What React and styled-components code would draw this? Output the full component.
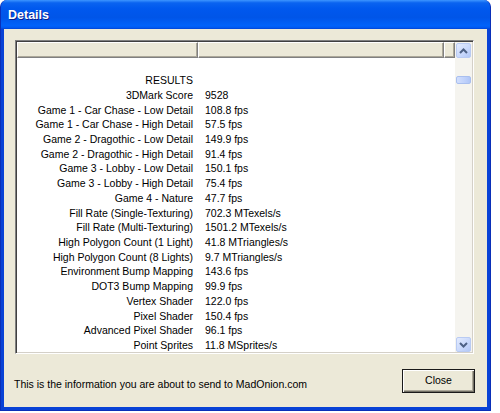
import React from 'react'
import styled, { createGlobalStyle } from 'styled-components'

const results = [
    ["", ""],
    ["RESULTS", ""],
    ["3DMark Score", "9528"],
    ["Game 1 - Car Chase - Low Detail", "108.8 fps"],
    ["Game 1 - Car Chase - High Detail", "57.5 fps"],
    ["Game 2 - Dragothic - Low Detail", "149.9 fps"],
    ["Game 2 - Dragothic - High Detail", "91.4 fps"],
    ["Game 3 - Lobby - Low Detail", "150.1 fps"],
    ["Game 3 - Lobby - High Detail", "75.4 fps"],
    ["Game 4 - Nature", "47.7 fps"],
    ["Fill Rate (Single-Texturing)", "702.3 MTexels/s"],
    ["Fill Rate (Multi-Texturing)", "1501.2 MTexels/s"],
    ["High Polygon Count (1 Light)", "41.8 MTriangles/s"],
    ["High Polygon Count (8 Lights)", "9.7 MTriangles/s"],
    ["Environment Bump Mapping", "143.6 fps"],
    ["DOT3 Bump Mapping", "99.9 fps"],
    ["Vertex Shader", "122.0 fps"],
    ["Pixel Shader", "150.4 fps"],
    ["Advanced Pixel Shader", "96.1 fps"],
    ["Point Sprites", "11.8 MSprites/s"],
]

const GlobalStyle = createGlobalStyle`
    html, body {
        margin: 0;
        padding: 0;
        background: #ffffff;
    }
    body {
        font-family: "Liberation Sans", Arial, sans-serif;
    }
`

const Window = styled.div`
    width: 491px;
    height: 411px;
    box-sizing: border-box;
    display: flex;
    flex-direction: column;
    background: #0842d6;
    border-radius: 7px 7px 0 0;
    overflow: hidden;
    border: 1px solid #0a2fb8;
    border-top: none;
`

const TitleBar = styled.div`
    height: 29px;
    flex-shrink: 0;
    display: flex;
    align-items: center;
    padding-left: 7px;
    background: linear-gradient(to bottom, #3d95ff 0%, #0a63f0 10%, #0058ee 30%, #0055e8 60%, #0062fa 88%, #005cf4 94%, #0044d6 100%);
`

const Title = styled.div`
    color: #ffffff;
    font-family: "Liberation Sans", Arial, sans-serif;
    font-weight: bold;
    font-size: 12.5px;
    text-shadow: 1px 1px 0 #0a1e8c;
`

const Client = styled.div`
    flex: 1;
    margin: 0 3px 3px 3px;
    background: #ece9d8;
    padding: 11px 13px 0 11px;
    display: flex;
    flex-direction: column;
`

const ListView = styled.div`
    height: 314px;
    box-sizing: border-box;
    border: 1px solid;
    border-color: #808080 #ffffff #ffffff #808080;
    box-shadow: inset 1px 1px 0 #404040, inset -1px -1px 0 #d4d0c8;
    padding: 1px;
    display: flex;
    background: #ffffff;
`

const ListBody = styled.div`
    flex: 1;
    display: flex;
    flex-direction: column;
    overflow: hidden;
`

const Header = styled.div`
    display: flex;
    height: 16px;
    flex-shrink: 0;
`

const HeaderCell = styled.div`
    width: ${p => p.w}px;
    flex: ${p => (p.grow ? 1 : 'none')};
    box-sizing: border-box;
    background: #ece9d8;
    border-top: 1px solid #ffffff;
    border-left: 1px solid #ffffff;
    border-right: 1px solid #808080;
    border-bottom: 1px solid #808080;
    box-shadow: inset -1px -1px 0 #aca899;
`

const Rows = styled.div`
    display: flex;
    flex-direction: column;
`

const Row = styled.div`
    display: grid;
    grid-template-columns: 181px 1fr;
    height: 14.72px;
    align-items: center;
    font-size: 10.5px;
    color: #000000;
    white-space: nowrap;
`

const Name = styled.div`
    text-align: right;
    padding-right: 5px;
`

const Value = styled.div`
    padding-left: 7px;
`

const ScrollBar = styled.div`
    width: 17px;
    flex-shrink: 0;
    background: #f5f4ef;
    display: flex;
    flex-direction: column;
    align-items: center;
    padding-top: 1px;
    box-sizing: border-box;
`

const ScrollButton = styled.div`
    width: 15px;
    height: 15px;
    box-sizing: border-box;
    border: 1px solid #b9cbf3;
    border-radius: 2px;
    background: linear-gradient(135deg, #e3ebfe 0%, #c7d7fb 60%, #b3c8f6 100%);
    display: flex;
    align-items: center;
    justify-content: center;
`

const Thumb = styled.div`
    width: 15px;
    height: 8px;
    box-sizing: border-box;
    margin-top: 18px;
    border: 1px solid #a9bfef;
    border-radius: 2px;
    background: linear-gradient(to right, #d2dffd 0%, #bfd1fb 60%, #b0c6f7 100%);
`

const Track = styled.div`
    flex: 1;
`

const Footer = styled.div`
    display: flex;
    align-items: center;
    justify-content: space-between;
    padding: 15px 0 0 0;
    margin-left: -1px;
    margin-right: -1px;
`

const FooterText = styled.div`
    font-size: 10.5px;
    color: #000000;
    padding-top: 5px;
`

const Button = styled.div`
    width: 73px;
    height: 24px;
    box-sizing: border-box;
    border: 1px solid #1a1a1a;
    background: #ece9d8;
    box-shadow: inset 1px 1px 0 #ffffff, inset -1px -1px 0 #716f64, inset -2px -2px 0 #aca899;
    display: flex;
    align-items: center;
    justify-content: center;
    font-size: 10.5px;
    color: #000000;
    padding-bottom: 3px;
`

const Arrow = ({ up }) => (
    <svg width="9" height="6" viewBox="0 0 9 6">
        <path
            d={up ? "M1 5 L4.5 1.5 L8 5" : "M1 1 L4.5 4.5 L8 1"}
            fill="none"
            stroke="#4d6185"
            strokeWidth="2"
        />
    </svg>
)

const App = () => {
    return (
        <>
            <GlobalStyle />
            <Window>
                <TitleBar>
                    <Title>Details</Title>
                </TitleBar>
                <Client>
                    <ListView>
                        <ListBody>
                            <Header>
                                <HeaderCell w={181} />
                                <HeaderCell w={246} />
                                <HeaderCell grow />
                            </Header>
                            <Rows>
                                {results.map((r, i) => (
                                    <Row key={i}>
                                        <Name>{r[0]}</Name>
                                        <Value>{r[1]}</Value>
                                    </Row>
                                ))}
                            </Rows>
                        </ListBody>
                        <ScrollBar>
                            <ScrollButton><Arrow up /></ScrollButton>
                            <Thumb />
                            <Track />
                            <ScrollButton><Arrow /></ScrollButton>
                        </ScrollBar>
                    </ListView>
                    <Footer>
                        <FooterText>This is the information you are about to send to MadOnion.com</FooterText>
                        <Button>Close</Button>
                    </Footer>
                </Client>
            </Window>
        </>
    )
}

export default App
